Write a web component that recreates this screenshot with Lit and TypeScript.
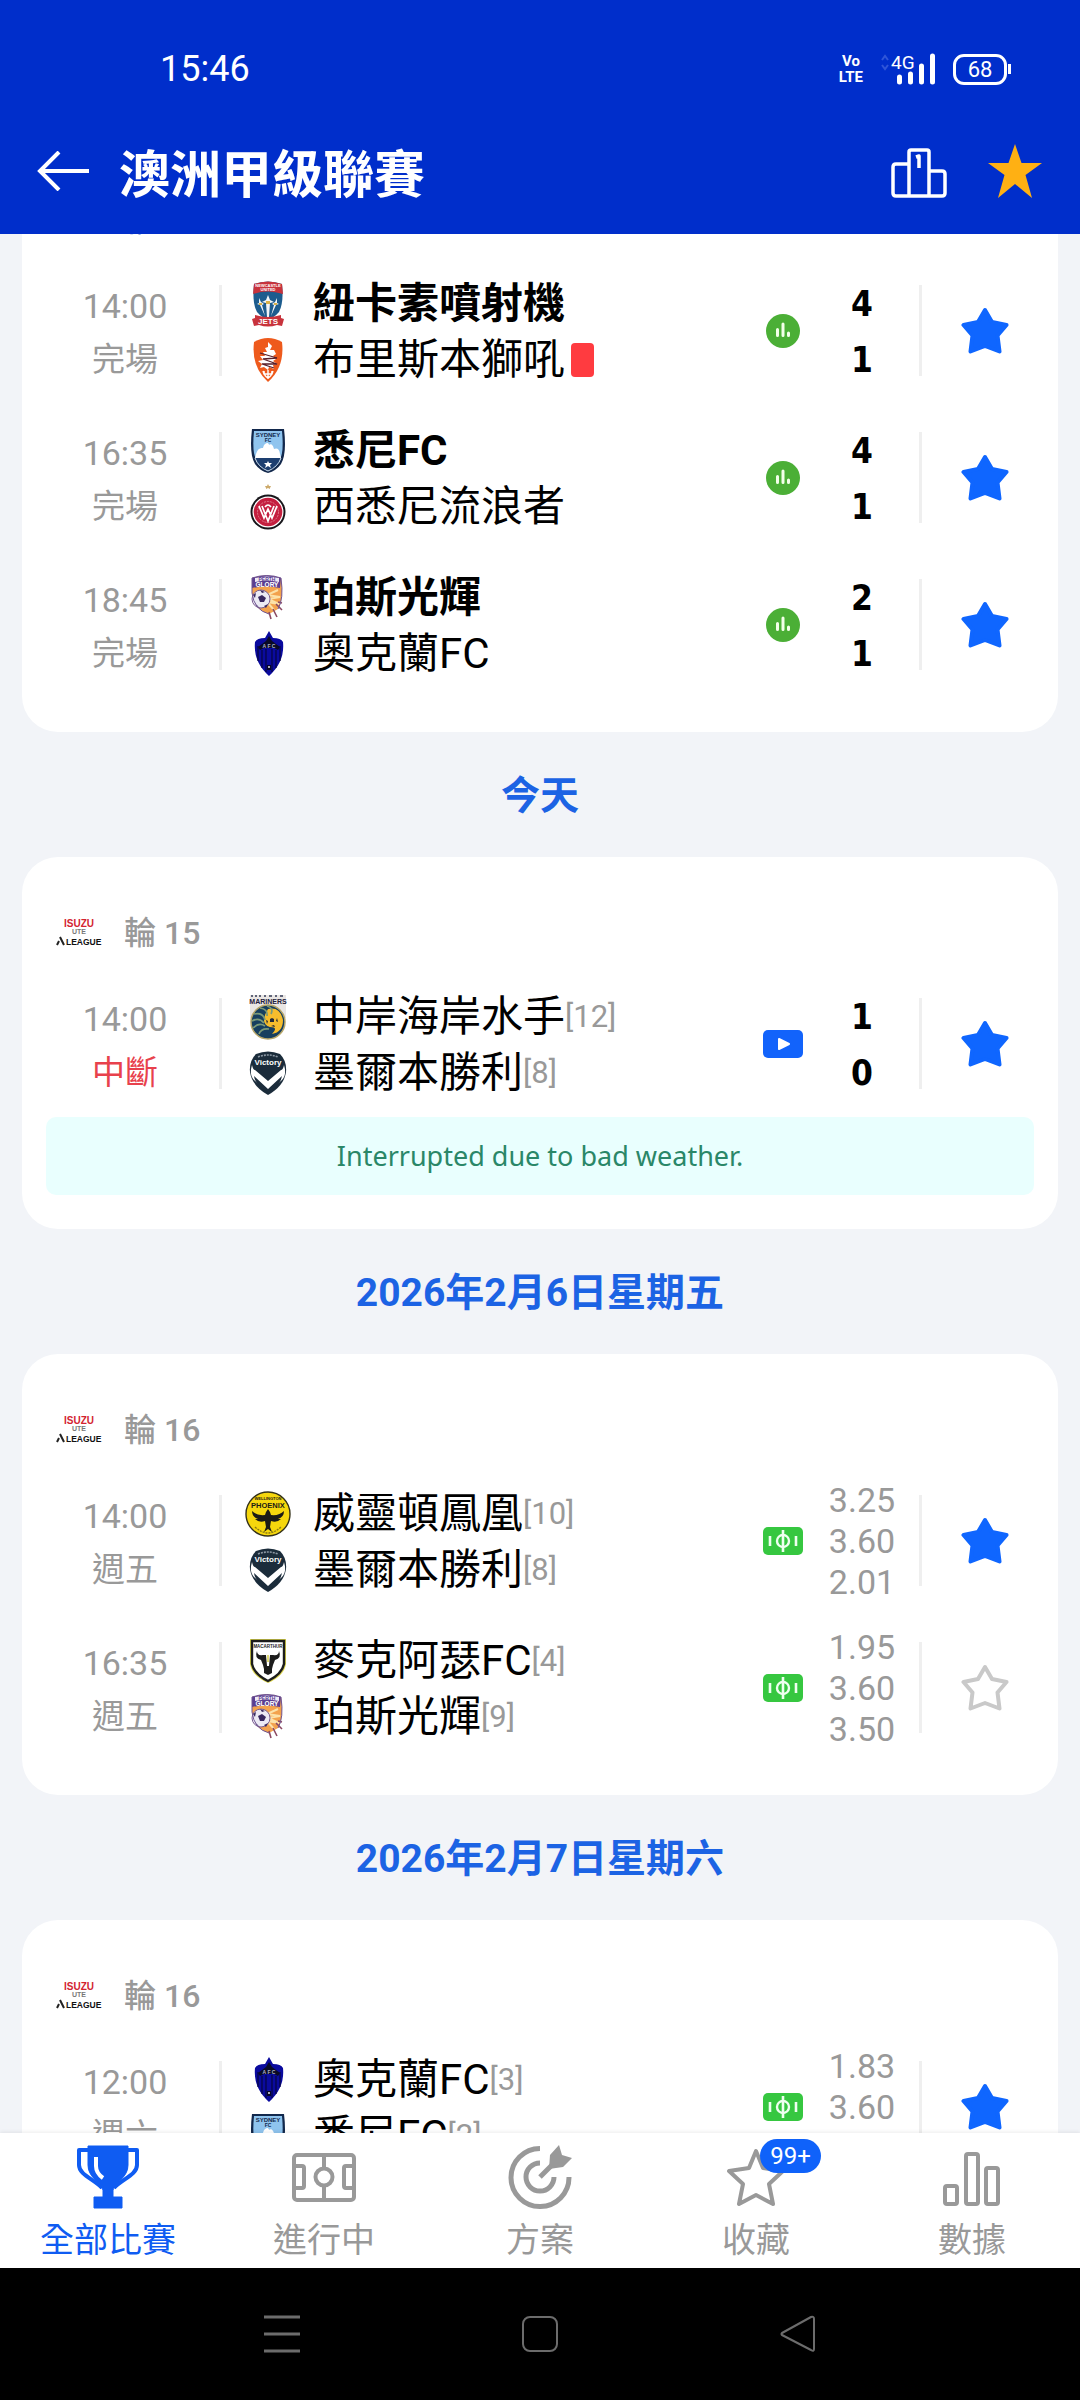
import { LitElement, html, css, svg, nothing } from "lit";
import type { TemplateResult } from "lit";
import { customElement, property, state } from "lit/decorators.js";
import { classMap } from "lit/directives/class-map.js";

interface Team {
  name: string;
  crest: string;
  rank?: number;
  winner?: boolean;
  redCard?: boolean;
}

interface Match {
  time: string;
  status: string;
  interrupted?: boolean;
  home: Team;
  away: Team;
  marker: "stats" | "video" | "field";
  scores?: string[];
  odds?: string[];
  favourite: boolean;
  note?: string;
}

interface MatchDay {
  label?: string;
  round: string;
  linked?: boolean;
  matches: Match[];
}

const DAYS: MatchDay[] = [
  {
    round: "輪 15",
    linked: true,
    matches: [
      {
        time: "14:00",
        status: "完場",
        home: { name: "紐卡素噴射機", crest: "jets", winner: true },
        away: { name: "布里斯本獅吼", crest: "roar", redCard: true },
        marker: "stats",
        scores: ["4", "1"],
        favourite: true,
      },
      {
        time: "16:35",
        status: "完場",
        home: { name: "悉尼FC", crest: "sydney", winner: true },
        away: { name: "西悉尼流浪者", crest: "wanderers" },
        marker: "stats",
        scores: ["4", "1"],
        favourite: true,
      },
      {
        time: "18:45",
        status: "完場",
        home: { name: "珀斯光輝", crest: "glory", winner: true },
        away: { name: "奧克蘭FC", crest: "auckland" },
        marker: "stats",
        scores: ["2", "1"],
        favourite: true,
      },
    ],
  },
  {
    label: "今天",
    round: "輪 15",
    matches: [
      {
        time: "14:00",
        status: "中斷",
        interrupted: true,
        home: { name: "中岸海岸水手", crest: "mariners", rank: 12 },
        away: { name: "墨爾本勝利", crest: "victory", rank: 8 },
        marker: "video",
        scores: ["1", "0"],
        favourite: true,
        note: "Interrupted due to bad weather.",
      },
    ],
  },
  {
    label: "2026年2月6日星期五",
    round: "輪 16",
    matches: [
      {
        time: "14:00",
        status: "週五",
        home: { name: "威靈頓鳳凰", crest: "phoenix", rank: 10 },
        away: { name: "墨爾本勝利", crest: "victory", rank: 8 },
        marker: "field",
        odds: ["3.25", "3.60", "2.01"],
        favourite: true,
      },
      {
        time: "16:35",
        status: "週五",
        home: { name: "麥克阿瑟FC", crest: "bulls", rank: 4 },
        away: { name: "珀斯光輝", crest: "glory", rank: 9 },
        marker: "field",
        odds: ["1.95", "3.60", "3.50"],
        favourite: false,
      },
    ],
  },
  {
    label: "2026年2月7日星期六",
    round: "輪 16",
    matches: [
      {
        time: "12:00",
        status: "週六",
        home: { name: "奧克蘭FC", crest: "auckland", rank: 3 },
        away: { name: "悉尼FC", crest: "sydney", rank: 2 },
        marker: "field",
        odds: ["1.83", "3.60", "3.80"],
        favourite: true,
      },
    ],
  },
];

const CRESTS: Record<string, TemplateResult> = {
  jets: svg`
    <path d="M9 3Q23-2 37 3Q39 22 34 31Q29 37 23 38Q17 37 12 31Q7 22 9 3Z" fill="#1d5c8e"/>
    <path d="M9 3Q23-2 37 3L38 13Q23 8 8 13Z" fill="#c8333c"/>
    <g fill="#fff" font-family="Liberation Sans" font-weight="700" text-anchor="middle">
      <text x="23" y="6" font-size="4">NEWCASTLE</text><text x="23" y="10" font-size="4">UNITED</text>
    </g>
    <path d="M23 14l2 5 4 2-4 1-1 14h-2l-1-14-4-1 4-2zM14 17l2 4 3 2-2 1 3 11-5-11-3-1 2-1zM32 17l-2 4-3 2 2 1-3 11 5-11 3-1-2-1z" fill="#f2f5f8"/>
    <path d="M21 20h4v3h-4zM14 22h3v2h-3zM29 22h3v2h-3z" fill="#d9b24a"/>
    <path d="M10 34Q23 38 36 34V37L39 38 37 45 32 44Q23 47 14 44L9 45 7 38 10 37Z" fill="#c8333c"/>
    <text x="23" y="43" font-size="8" font-weight="700" fill="#fff" text-anchor="middle" font-family="Liberation Sans">JETS</text>`,
  roar: svg`
    <path d="M9 5Q23-3 37 5Q40 30 23 45Q6 30 9 5Z" fill="#ee5a1c"/>
    <path d="M23 5l4 4-2 4 4 0 2 4-3 2 3 3-3 2 4 3-4 1 1 4-5-2-1 3-4-3-4 1 2-4-4-3 5-1-3-4 5 0-2-4 4 0-2-4 3-1z" fill="#fff"/>
    <path d="M15 16l17 5-14 1 14 5-15 0 12 4" fill="none" stroke="#5a1f2a" stroke-width="1.3"/>
    <path d="M18 34l1 3h8l1-3M23 33v9M19 34q0 5 4 7 4-2 4-7" fill="none" stroke="#fff" stroke-width="1.4"/>`,
  sydney: svg`
    <path d="M7 1H39Q42 26 36 36Q31 43 23 45Q15 43 10 36Q4 26 7 1Z" fill="#12284c"/>
    <path d="M9 3H37Q39 24 35 31H11Q7 24 9 3Z" fill="#8fc4ee"/>
    <path d="M11 26Q13 19 18 20Q19 15 23 15Q24 18 26 16Q29 18 29 21Q34 19 35 26L36 30H10Z" fill="#fff"/>
    <path d="M10 30H36Q33 39 23 42Q13 39 10 30Z" fill="#1d3f70"/>
    <path d="M10 30Q13 39 23 43Q33 39 36 30" fill="none" stroke="#cfe3f5"/>
    <path d="M23 33l1 2h3l-2 2 1 3-3-2-3 2 1-3-2-2h3z" fill="#fff"/>
    <g fill="#12284c" font-family="Liberation Sans" font-weight="700" text-anchor="middle">
      <text x="23" y="9" font-size="6">SYDNEY</text><text x="23" y="14" font-size="5">FC</text>
    </g>`,
  wanderers: svg`
    <path d="M23 0l1 2h2l-1 2v1l-2-1-2 1v-1l-1-2h2z" fill="#cdaa6b"/>
    <circle cx="23" cy="28" r="17.5" fill="#17151a"/>
    <circle cx="23" cy="28" r="15.5" fill="#fff"/>
    <circle cx="23" cy="28" r="14.3" fill="#c41f3f"/>
    <circle cx="23" cy="28" r="10.5" fill="none" stroke="#e58a9b" stroke-width=".8" stroke-dasharray="2 1"/>
    <path d="M14 22l5 12 4-9 4 9 5-12M17 22l6 15 6-15M20 23q3-4 6 0" fill="none" stroke="#fff" stroke-width="1.7"/>`,
  glory: svg`
    <path d="M7 3Q22-2 36 3Q39 24 33 34L24 39Q9 35 7 18Z" fill="#f3a24d"/>
    <path d="M33 15L22 20 35 22 23 24 34 29 22 27 29 35" fill="none" stroke="#fce2a9" stroke-width="2"/>
    <path d="M7 3Q22-2 36 3L35 13Q22 10 7 13Z" fill="#5b3f91"/>
    <path d="M10 3Q22 0 34 3V7Q22 4 10 7Z" fill="#efeaf6"/>
    <circle cx="16" cy="24" r="9" fill="#eceaf4" stroke="#7a5e91"/>
    <path d="M13 22l4-2 4 3-2 4h-4zM8 20l3-2-1 5zM15 15l5 2-3 1zM10 29l3 2 1 2zM19 31l4-2-2 4z" fill="#38285f"/>
    <path d="M31 29l6 6M28 34l4 8M24 37l2 7M33 27l4 1" stroke="#8b4a63" stroke-width="1.6"/>
    <g font-family="Liberation Sans" font-weight="700" text-anchor="middle">
      <text x="22" y="6" font-size="5" fill="#5b3f91">PERTH</text><text x="22" y="12" font-size="6.500" fill="#fff">GLORY</text>
    </g>
    <path d="M7 3Q22-2 36 3Q39 24 33 34M7 3V18Q9 35 24 39" fill="none" stroke="#6f5492"/>`,
  auckland: svg`
    <path d="M24 0L28 7Q36 7 38 11Q40 31 24 45Q8 31 10 11Q12 7 20 7Z" fill="#0a0a9e"/>
    <path d="M24 5l3 5 8 6-2 3-4-2H19l-4 2-2-3 8-6z" fill="#090a25"/>
    <path d="M17 19v18M21 18v23M27 18v23M31 19v18M13 15v15M35 15v15" stroke="#050542" stroke-width="1.2"/>
    <text x="24" y="17" font-size="5" font-weight="700" text-anchor="middle" fill="#aeb1c8" font-family="Liberation Sans">A F C</text>
    <path d="M22 34h4v5h-4z" fill="#060627"/><path d="M23 35h2v2h-2z" fill="#aab"/>`,
  mariners: svg`
    <path d="M5 1H41V24H5Z" fill="#e9e6e4"/>
    <circle cx="23" cy="28" r="17" fill="#173f5f" stroke="#b8a76a" stroke-width="1.5"/>
    <path d="M23 15Q35 12 38 26Q38 38 27 40Q34 33 25 33Q14 30 23 15Z" fill="#f6bd2d"/>
    <path d="M9 20Q18 18 20 26M7 27Q14 23 19 29M8 34Q14 28 20 32M14 40Q16 34 24 35M15 14Q23 15 22 22M22 12Q29 14 26 20" fill="none" stroke="#7b9a78" stroke-width="1.7"/>
    <circle cx="27" cy="27" r="6" fill="#f6bd2d"/>
    <path d="M25 25l2-1 2 1v3h-4zM21 26l2 1-1 3zM32 24l-1 3 2 1zM26 32l3-1 1 2z" fill="#222a38"/>
    <text x="23" y="10" font-size="7" font-weight="700" text-anchor="middle" fill="#24203a" font-family="Liberation Sans Narrow, Liberation Sans">MARINERS</text>
    <path d="M6 2h2m2 0h2m2 0h2m3 0h2m3 0h3m3 0h2m3 0h3" stroke="#353b56" stroke-width="1.5"/>`,
  victory: svg`
    <path d="M11 4Q23-1 35 4Q42 11 41 22Q39 36 23 45Q7 36 5 22Q4 11 11 4Z" fill="#1b2c3b"/>
    <path d="M7 15Q8 20 10 20L23 31 36 20Q38 20 39 15Q42 25 37 30L23 42 9 30Q4 25 7 15Z" fill="#fff"/>
    <path d="M9 26L23 39 37 26Q36 35 23 43Q10 35 9 26Z" fill="#1b2c3b"/>
    <path d="M13 7Q23 3 33 7" fill="none" stroke="#8b97a3" stroke-width="1.6" stroke-dasharray="2 1"/>
    <text x="23" y="15" font-size="8" font-weight="700" text-anchor="middle" fill="#fff" font-family="Liberation Sans">Victory</text>`,
  phoenix: svg`
    <circle cx="23" cy="23" r="22" fill="#f6d70d" stroke="#35321a" stroke-width="1.4"/>
    <g font-family="Liberation Sans" font-weight="700" text-anchor="middle" fill="#1c1b16">
      <text x="23" y="9" font-size="4">WELLINGTON</text><text x="23" y="17" font-size="7.500">PHOENIX</text>
    </g>
    <path d="M23 18l2 3 1 3Q34 25 39 20Q39 26 33 28L36 28Q32 32 26 30L25 36 27 41 23 38 19 41 21 36 20 30Q14 32 10 28L13 28Q7 26 7 20Q12 25 20 24L21 21Z" fill="#1c1b16"/>
    <path d="M10 36Q23 48 36 36" fill="none" stroke="#8d7d13" stroke-width="1.4" stroke-dasharray="2 1"/>`,
  bulls: svg`
    <path d="M5 1H41V26Q39 38 23 45Q7 38 5 26Z" fill="#d9d34a"/>
    <path d="M7 3H39V26Q37 36 23 43Q9 36 7 26Z" fill="#fff" stroke="#1c1c1c" stroke-width="2.4"/>
    <text x="23" y="10" font-size="4.500" font-weight="700" text-anchor="middle" fill="#1c1c1c" font-family="Liberation Sans">MACARTHUR</text>
    <path d="M12 13Q12 18 18 17L28 17Q34 18 34 13Q37 20 30 22L28 27 27 31 27 35 23 37 19 35 19 31 18 27 16 22Q9 20 12 13Z" fill="#1c1c1c"/>
    <path d="M21 17h4l-1 11h-2z" fill="#fff"/>
    <path d="M23 17v7" stroke="#d7d04b" stroke-width="1.5"/>`,
};

const STAR_PATH =
  "M24 3L31 15 45.500 18 36.500 28.500 38.500 44.500 24 39 9.500 44.500 11.500 28.500 2.500 18 17 15Z";

const MARKERS: Record<Match["marker"], TemplateResult> = {
  stats: html`<svg class="marker" viewBox="0 0 40 34" role="img" aria-label="數據">
    <circle cx="20" cy="17" r="17" fill="#4baf36" />
    <path d="M14.500 15.500V21.500M20 10V21.500M25.500 19V21.500" stroke="#f3ffe9" stroke-width="3" stroke-linecap="round" />
  </svg>`,
  video: html`<svg class="marker" viewBox="0 0 40 34" role="img" aria-label="直播">
    <rect y="3" width="40" height="28" rx="5" fill="#1263fb" />
    <path d="M16 12L26 17 16 22Z" fill="#fff" stroke="#fff" stroke-width="2" stroke-linejoin="round" />
  </svg>`,
  field: html`<svg class="marker" viewBox="0 0 40 34" role="img" aria-label="陣容">
    <rect y="3" width="40" height="28" rx="5" fill="#36c740" />
    <path d="M7 12V22M33 12V22M20 6V28" stroke="#effff0" stroke-width="2.600" />
    <circle cx="20" cy="17" r="6" fill="none" stroke="#effff0" stroke-width="2.400" />
  </svg>`,
};

@customElement("match-row")
class MatchRow extends LitElement {
  @property({ attribute: false }) match!: Match;
  @state() private favourite = false;

  static styles = css`
    :host {
      display: block;
    }
    .row {
      display: flex;
      align-items: center;
      height: 147px;
      padding: 0 11px 0 9px;
    }
    .when {
      width: 188px;
      padding-top: 4px;
      display: flex;
      flex-direction: column;
      align-items: center;
      font-size: 34px;
      line-height: 53px;
      color: #999;
    }
    .status {
      font-size: 33px;
    }
    .status.interrupted {
      color: #e8414c;
    }
    .rule {
      width: 3px;
      height: 91px;
      background: #efefef;
    }
    .teams {
      flex: 1;
      min-width: 0;
      padding-top: 2px;
    }
    .team {
      display: flex;
      align-items: center;
      height: 56px;
      line-height: 58px;
      white-space: nowrap;
      color: #000;
    }
    .crest {
      flex: none;
      width: 46px;
      height: 46px;
      margin: 0 22px 0 23px;
    }
    .name {
      font-size: 42px;
    }
    .winner {
      font-weight: 700;
    }
    .rank {
      font-size: 31px;
      color: #999;
    }
    .red-card {
      width: 23px;
      height: 34px;
      margin-left: 6px;
      border-radius: 4px;
      background: #ff3b40;
    }
    .marker {
      width: 40px;
      height: 34px;
    }
    .figures {
      width: 116px;
      padding: 2px 0 0 2px;
      box-sizing: border-box;
      text-align: center;
    }
    .score {
      display: block;
      font: 700 35px/56px "DejaVu Sans Condensed", "DejaVu Sans", sans-serif;
      color: #000;
    }
    .odd {
      display: block;
      font-size: 34px;
      line-height: 41px;
      color: #999;
    }
    .star {
      display: flex;
      align-items: center;
      justify-content: center;
      width: 125px;
      height: 91px;
      padding: 0;
      border: 0;
      background: none;
    }
    .star svg {
      width: 48px;
      height: 48px;
      fill: none;
      stroke: #c9c9c9;
      stroke-width: 4;
      stroke-linejoin: round;
    }
    .star.on svg {
      fill: #0f66ff;
      stroke: #0f66ff;
    }
    .note {
      margin: 0 24px;
      border-radius: 10px;
      background: #e9fffe;
      color: #2a8768;
      font: 27px/78px "Noto Sans", sans-serif;
      text-align: center;
    }
  `;

  willUpdate(changed: Map<string, unknown>) {
    if (changed.has("match")) this.favourite = this.match.favourite;
  }

  private team(t: Team) {
    return html`<div class="team">
      <svg class="crest" viewBox="0 0 46 46" aria-hidden="true">${CRESTS[t.crest]}</svg>
      <span class=${classMap({ name: true, winner: !!t.winner })}>${t.name}</span>
      ${t.rank ? html`<span class="rank">[${t.rank}]</span>` : nothing}
      ${t.redCard ? html`<span class="red-card"></span>` : nothing}
    </div>`;
  }

  render() {
    const m = this.match;
    return html`
      <div class="row">
        <div class="when">
          <time>${m.time}</time>
          <span class=${classMap({ status: true, interrupted: !!m.interrupted })}>${m.status}</span>
        </div>
        <span class="rule"></span>
        <div class="teams">${this.team(m.home)}${this.team(m.away)}</div>
        ${MARKERS[m.marker]}
        <div class="figures">
          ${m.scores?.map((s) => html`<span class="score">${s}</span>`)}
          ${m.odds?.map((o) => html`<span class="odd">${o}</span>`)}
        </div>
        <span class="rule"></span>
        <button
          class=${classMap({ star: true, on: this.favourite })}
          aria-label="收藏"
          aria-pressed=${this.favourite ? "true" : "false"}
          @click=${() => (this.favourite = !this.favourite)}
        >
          <svg viewBox="0 0 48 48"><path d=${STAR_PATH} /></svg>
        </button>
      </div>
      ${m.note ? html`<div class="note">${m.note}</div>` : nothing}
    `;
  }
}

@customElement("match-day")
class MatchDayCard extends LitElement {
  @property({ attribute: false }) day!: MatchDay;

  static styles = css`
    :host {
      display: block;
    }
    .label {
      height: 121px;
      margin: 0;
      padding-top: 4px;
      font-size: 39px;
      font-weight: 700;
      line-height: 121px;
      text-align: center;
      color: #1c63e4;
    }
    .card {
      margin: 0 22px;
      padding-bottom: 34px;
      border-radius: 36px;
      background: #fff;
    }
    .round {
      display: flex;
      align-items: center;
      gap: 22px;
      height: 75px;
      padding: 38px 34px 0;
      font-size: 32px;
      font-weight: 500;
      line-height: 76px;
      color: #999;
    }
    .linked {
      color: #4a6fc4;
    }
    .league {
      width: 46px;
      height: 30px;
    }
  `;

  render() {
    const d = this.day;
    return html`
      ${d.label ? html`<h2 class="label">${d.label}</h2>` : nothing}
      <section class="card">
        <div class=${classMap({ round: true, linked: !!d.linked })}>
          <svg class="league" viewBox="0 0 46 30" aria-hidden="true">
            <g font-family="Liberation Sans" font-weight="700">
              <text x="23" y="9" font-size="10" text-anchor="middle" fill="#d3232f">ISUZU</text>
              <text x="23" y="16" font-size="7" text-anchor="middle" fill="#777">UTE</text>
              <text x="10" y="27" font-size="8.500" fill="#111">LEAGUE</text>
            </g>
            <path d="M1 27L3 23M4 19L8 27" fill="none" stroke="#222" stroke-width="2" />
          </svg>
          <span>${d.round}</span>
        </div>
        ${d.matches.map((m) => html`<match-row .match=${m}></match-row>`)}
      </section>
    `;
  }
}

interface Tab {
  label: string;
  icon: TemplateResult;
  badge?: string;
}

const TABS: Tab[] = [
  {
    label: "全部比賽",
    icon: svg`<path d="M12 1H52V20C52 32 41 36 37 45V52H46V63H18V52H27V45C23 36 12 32 12 20Z" fill="currentColor" stroke-width="1"/>
      <path d="M12 5H3V20C3 30 18 34 26 43M52 5H61V20C61 30 46 34 38 43"/>
      <path d="M20 12V21Q20 28 27 33" stroke="#fff"/>`,
  },
  {
    label: "進行中",
    icon: svg`<rect x="2" y="10" width="60" height="45" rx="3"/><circle cx="32" cy="32" r="8.500"/>
      <path d="M32 10V23M32 41V55M2 21H10Q12 21 12 23V41Q12 43 10 43H2M62 21H54Q52 21 52 23V41Q52 43 54 43H62"/>`,
  },
  {
    label: "方案",
    icon: svg`<path d="M32 3.500A29 29 0 1 0 61 32M32 18A14 14 0 1 0 46 32" stroke-width="5"/>
      <path d="M32 32L46 18" stroke-width="5"/><path d="M41 24L42 10 51 0 54 10 64 13 55 22Z" fill="currentColor" stroke="none"/>`,
  },
  {
    label: "收藏",
    badge: "99+",
    icon: svg`<path d="M32 6L39 23 59 26 45 39 49 59 32 50 15 59 19 39 5 26 25 23Z"/>`,
  },
  {
    label: "數據",
    icon: svg`<rect x="5" y="41" width="12" height="18" rx="2"/><rect x="26" y="9" width="12" height="50" rx="2"/><rect x="46" y="23" width="12" height="36" rx="2"/>`,
  },
];

@customElement("app-root")
class AppRoot extends LitElement {
  @state() private active = 0;

  static styles = css`
    :host {
      display: flex;
      flex-direction: column;
      height: 100vh;
      background: #f2f4f8;
      font-family: Roboto, "Noto Sans CJK TC", sans-serif;
    }
    .top {
      background: #002ecb;
      color: #fff;
    }
    .status {
      display: flex;
      align-items: center;
      gap: 18px;
      height: 78px;
      padding: 30px 69px 0 160px;
      line-height: 30px;
    }
    .clock {
      flex: 1;
      font-size: 36px;
    }
    .volte {
      display: flex;
      flex-direction: column;
      font: 700 15px/16px "Liberation Sans Narrow", Roboto, sans-serif;
      text-align: center;
    }
    .signal {
      width: 54px;
      height: 30px;
      overflow: visible;
    }
    .battery {
      display: flex;
      align-items: center;
    }
    .cell {
      width: 48px;
      border: 3px solid #fff;
      border-radius: 11px;
      font-size: 22px;
      line-height: 25px;
      text-align: center;
    }
    .nub {
      width: 3px;
      height: 10px;
      margin-left: 1px;
      background: #fff;
    }
    .title-bar {
      display: flex;
      align-items: center;
      height: 126px;
      padding: 0 37px;
      gap: 40px;
    }
    .title {
      flex: 1;
      margin: 0;
      padding-top: 10px;
      font-size: 51px;
      font-weight: 700;
      line-height: 72px;
    }
    .icon-button {
      display: flex;
      padding: 0;
      border: 0;
      background: none;
      color: inherit;
    }
    .back {
      margin-right: -10px;
    }
    .list {
      flex: 1;
      min-height: 0;
      overflow: hidden;
    }
    .scrolled {
      margin-top: -90px;
    }
    .tabs {
      display: flex;
      background: #fff;
      box-shadow: 0 -1px 4px rgba(0, 0, 0, 0.08);
      position: relative;
    }
    .tab {
      flex: 1;
      display: flex;
      flex-direction: column;
      align-items: center;
      height: 135px;
      padding: 12px 0 0;
      border: 0;
      background: none;
      font: 34px/62px Roboto, "Noto Sans CJK TC", sans-serif;
      color: #999;
    }
    .tab.active {
      color: #0f5cf2;
    }
    .tab-icon {
      position: relative;
      display: block;
      width: 64px;
      height: 64px;
    }
    .tab-icon svg {
      display: block;
      width: 64px;
      height: 64px;
      fill: none;
      stroke: currentColor;
      stroke-width: 4;
      stroke-linejoin: round;
    }
    .badge {
      position: absolute;
      left: 36px;
      top: -6px;
      width: 61px;
      border-radius: 17px;
      background: #0f62fa;
      color: #fff;
      font-size: 24px;
      line-height: 34px;
    }
    .system {
      display: flex;
      align-items: center;
      justify-content: center;
      gap: 222px;
      height: 132px;
      background: #000;
      color: #6c6c6c;
    }
  `;

  render() {
    return html`
      <header class="top">
        <div class="status">
          <span class="clock">15:46</span>
          <span class="volte"><span>Vo</span><span>LTE</span></span>
          <svg class="signal" viewBox="0 0 54 30" aria-hidden="true">
            <path d="M1 6L4 2 7 6M1 11L4 15 7 11" fill="none" stroke="#2f55d8" stroke-width="2" />
            <text x="10" y="15" font-size="19" font-family="Roboto" fill="#fff">4G</text>
            <path d="M18.500 28V23M29.500 28V20M40.500 28V12M51.500 28V2" stroke="#fff" stroke-width="5" stroke-linecap="round" />
          </svg>
          <span class="battery"><span class="cell">68</span><span class="nub"></span></span>
        </div>
        <div class="title-bar">
          <button class="icon-button back" aria-label="返回">
            <svg width="52" height="40" viewBox="0 0 52 40" fill="none" stroke="#fff" stroke-width="4">
              <path d="M52 20H3M22 1L3 20 22 39" />
            </svg>
          </button>
          <h1 class="title">澳洲甲級聯賽</h1>
          <button class="icon-button" aria-label="排名">
            <svg width="56" height="54" viewBox="0 -4 56 54" fill="none" stroke="#fff" stroke-width="3.500" stroke-linejoin="round">
              <path d="M18 48V4Q18 2 20 2H36Q38 2 38 4V48M18 16H5Q2 16 2 19V45Q2 48 5 48H51Q54 48 54 45V26Q54 23 51 23H38M25 9L28 8V20" />
            </svg>
          </button>
          <button class="icon-button" aria-label="收藏聯賽">
            <svg width="56" height="56" viewBox="0 0 56 56">
              <path d="M28 1L34.500 20H55L38.500 32 45 55 28 41 11 55 17.500 32 1 20H21.500Z" fill="#ffb013" />
            </svg>
          </button>
        </div>
      </header>
      <main class="list">
        <div class="scrolled">${DAYS.map((d) => html`<match-day .day=${d}></match-day>`)}</div>
      </main>
      <nav class="tabs">
        ${TABS.map(
          (t, i) => html`<button
            class=${classMap({ tab: true, active: i === this.active })}
            @click=${() => (this.active = i)}
          >
            <span class="tab-icon">
              <svg viewBox="0 0 64 64" aria-hidden="true">${t.icon}</svg>
              ${t.badge ? html`<span class="badge">${t.badge}</span>` : nothing}
            </span>
            ${t.label}
          </button>`
        )}
      </nav>
      <footer class="system">
        <button class="icon-button" aria-label="最近">
          <svg width="36" height="38" viewBox="0 0 36 38" stroke="currentColor" stroke-width="3">
            <path d="M0 2H36M0 19H36M0 36H36" />
          </svg>
        </button>
        <button class="icon-button" aria-label="主頁">
          <svg width="36" height="38" viewBox="0 0 36 38" fill="none" stroke="currentColor" stroke-width="2">
            <rect x="1" y="2" width="34" height="34" rx="7" />
          </svg>
        </button>
        <button class="icon-button" aria-label="上一頁">
          <svg width="36" height="38" viewBox="0 0 36 38" fill="none" stroke="currentColor" stroke-width="2" stroke-linejoin="round">
            <path d="M2 18L31 2Q34 1 34 4V34Q34 37 31 35L2 20Q1 19 2 18Z" />
          </svg>
        </button>
      </footer>
    `;
  }
}
